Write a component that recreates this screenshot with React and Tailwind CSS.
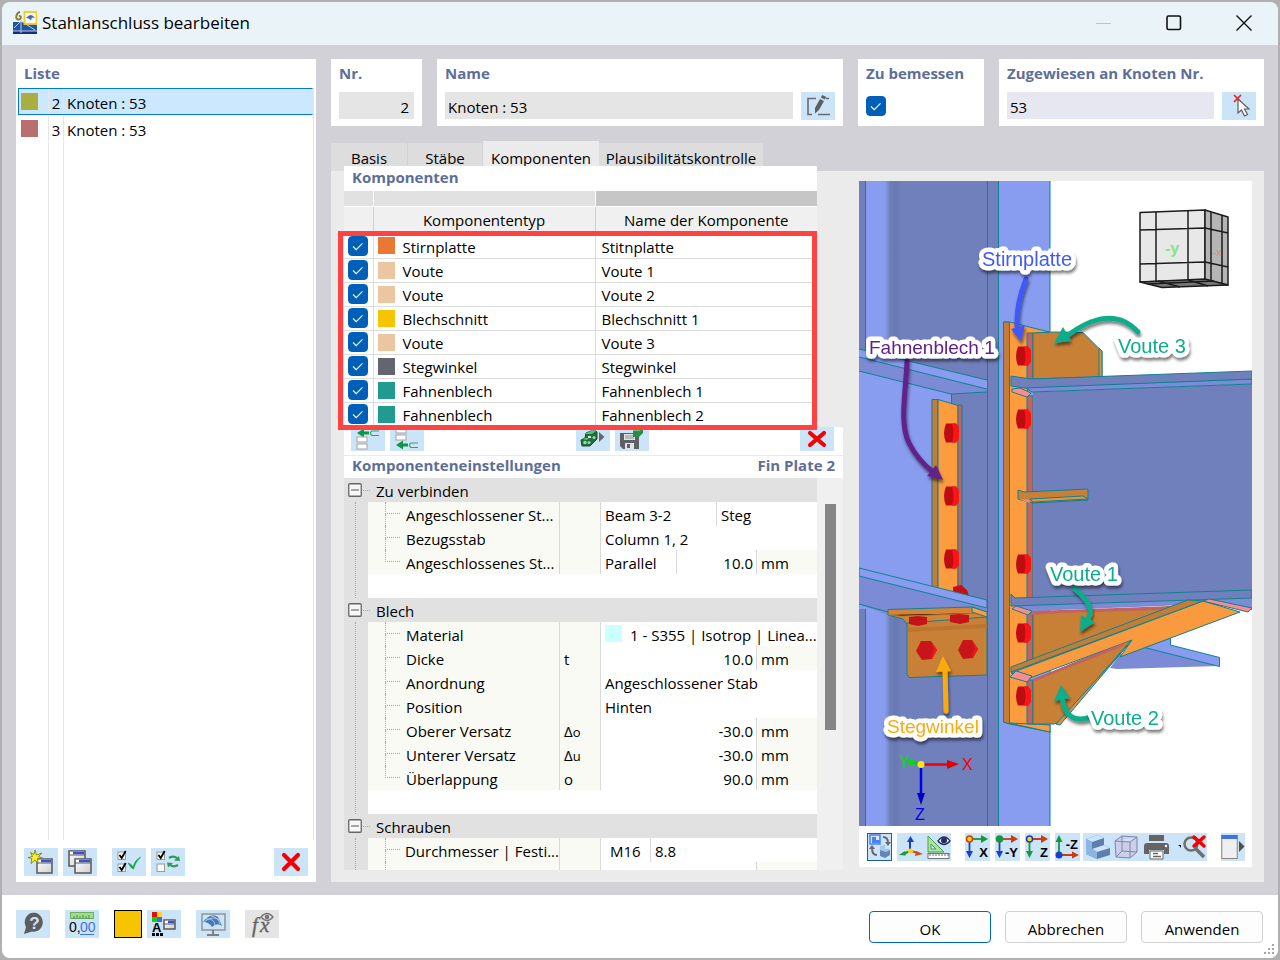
import { useState } from "react";

const entries = [
  { no: 2, name: "Knoten : 53", swatch: "bg-[#aaad42]" },
  { no: 3, name: "Knoten : 53", swatch: "bg-[#b96f70]" },
];

const components = [
  { type: "Stirnplatte", name: "Stitnplatte", swatch: "bg-[#e87832]" },
  { type: "Voute", name: "Voute 1", swatch: "bg-[#ecc5a1]" },
  { type: "Voute", name: "Voute 2", swatch: "bg-[#ecc5a1]" },
  { type: "Blechschnitt", name: "Blechschnitt 1", swatch: "bg-[#f6c500]" },
  { type: "Voute", name: "Voute 3", swatch: "bg-[#ecc5a1]" },
  { type: "Stegwinkel", name: "Stegwinkel", swatch: "bg-[#63666f]" },
  { type: "Fahnenblech", name: "Fahnenblech 1", swatch: "bg-[#219b90]" },
  { type: "Fahnenblech", name: "Fahnenblech 2", swatch: "bg-[#219b90]" },
];

const groups = [
  {
    title: "Zu verbinden",
    rows: [
      { label: "Angeschlossener St...", split: ["Beam 3-2", "Steg"], splitWidth: "w-[112px]" },
      { label: "Bezugsstab", text: "Column 1, 2" },
      { label: "Angeschlossenes St...", prefix: "Parallel", value: "10.0", unit: "mm" },
    ],
  },
  {
    title: "Blech",
    rows: [
      { label: "Material", text: "1 - S355 | Isotrop | Linea...", swatch: true },
      { label: "Dicke", symbol: "t", value: "10.0", unit: "mm" },
      { label: "Anordnung", text: "Angeschlossener Stab" },
      { label: "Position", text: "Hinten" },
      { label: "Oberer Versatz", symbol: "Δ", sub: "o", value: "-30.0", unit: "mm" },
      { label: "Unterer Versatz", symbol: "Δ", sub: "u", value: "-30.0", unit: "mm" },
      { label: "Überlappung", symbol: "o", value: "90.0", unit: "mm" },
    ],
  },
  {
    title: "Schrauben",
    open: true,
    rows: [
      { label: "Durchmesser | Festi...", split: ["M16", "8.8"], splitWidth: "w-[46px] pl-[5px]" },
      { label: "", value: "", unit: " " },
    ],
  },
];

const tabs = [
  { name: "Basis", width: "w-[77px]" },
  { name: "Stäbe", width: "w-[75px]" },
  { name: "Komponenten", width: "w-[116px]" },
  { name: "Plausibilitätskontrolle", width: "w-[165px]" },
];

const Check = ({ label, checked, onChange }) => (
  <span className="grid w-5 h-5">
    <input
      type="checkbox"
      aria-label={label}
      checked={checked}
      onChange={onChange}
      className="peer col-start-1 row-start-1 w-5 h-5 appearance-none rounded border border-[#8a8a8a] bg-white checked:border-[#005fb8] checked:bg-[#005fb8]"
    />
    <svg
      viewBox="0 0 20 20"
      className="pointer-events-none col-start-1 row-start-1 w-5 h-5 opacity-0 peer-checked:opacity-100"
      fill="none"
      stroke="#fff"
      strokeWidth="1.1"
    >
      <path d="M5 10.5l3.2 3.2 6.3-6.4" />
    </svg>
  </span>
);

const IconButton = ({ label, children, className = "w-[34px] h-7 bg-[#cce4f7]" }) => (
  <button type="button" aria-label={label} className={`flex shrink-0 items-end justify-center overflow-hidden ${className}`}>
    {children}
  </button>
);

const Icon = ({ children, w = 34 }) => (
  <svg viewBox={`0 0 ${w} 28`} width={w} height="28" className="shrink-0" fill="none">
    {children}
  </svg>
);

const DeleteIcon = () => (
  <Icon>
    <path d="M10 7l14 14M24 7L10 21" stroke="#f50000" strokeWidth="4.2" strokeLinecap="round" />
  </Icon>
);

const MiniWindow = ({ x, y, w = 16, h = 15 }) => (
  <g>
    <rect x={x} y={y} width={w} height={h} fill="url(#winFill)" stroke="#606060" strokeWidth="1.6" />
    <path d={`M${x + 1} ${y + 2}h${w - 2}`} stroke="#fff" strokeWidth="2.4" />
    <path d={`M${x + 4} ${y + 2}h${w - 5}`} stroke="#3551d8" strokeWidth="2.4" />
    <path d={`M${x} ${y + 4}h${w}`} stroke="#606060" strokeWidth="1.2" />
  </g>
);

const MiniCheck = ({ x, y, checked = true }) => (
  <g>
    <rect x={x} y={y} width="7.5" height="7.5" fill="#f7f7f7" stroke="#9a9a9a" />
    {checked && <path d={`M${x + 1.5} ${y + 3}l2.2 3 4-7`} stroke="#000" strokeWidth="1.8" />}
  </g>
);

const AppLogo = () => (
  <svg viewBox="0 0 24 24" width="24" height="24" className="shrink-0">
    <rect y="11" width="24" height="9" fill="#2454a0" />
    <rect y="20" width="24" height="3" fill="#152e7b" />
    <path d="M0 20h24M8 10v12M8 10L1 17M8 10l14 9M11 12l13 1" stroke="#b7cce8" strokeWidth="1" fill="none" />
    <path d="M7 1C3 2 2 8 5 8.500s4-4 1-3.500" stroke="#8a8130" strokeWidth="2" fill="none" />
    <rect x="11.5" y="1" width="12" height="12" fill="#fff" stroke="#f2c91e" strokeWidth="1.8" />
    <path d="M13 7q5-6 9 0l-3-.5-1 3-2-2z" fill="#3f6ca6" />
  </svg>
);

const Titlebar = () => (
  <header className="flex h-[43px] shrink-0 items-center bg-[#eaf4f8] pr-[26px] pb-0.5 pl-[11px]">
    <AppLogo />
    <h1 className="ml-[5px] flex-1 text-[17px]">Stahlanschluss bearbeiten</h1>
    <div className="flex items-center gap-[54px]">
      <button type="button" aria-label="Minimieren">
        <svg width="16" height="16"><path d="M0 8.5h15" stroke="#bdc3c6" /></svg>
      </button>
      <button type="button" aria-label="Maximieren">
        <svg width="16" height="16"><rect x="1" y="1" width="13.5" height="13.5" rx="1.5" fill="none" stroke="#111" strokeWidth="1.6" /></svg>
      </button>
      <button type="button" aria-label="Schließen">
        <svg width="16" height="16"><path d="M.5.5l15 15M15.5.5L.5 15.5" stroke="#111" strokeWidth="1.4" /></svg>
      </button>
    </div>
  </header>
);

const ListPanel = ({ selected, onSelect }) => (
  <aside className="flex w-[300px] shrink-0 flex-col bg-white">
    <h2 className="h-[29px] px-2 pt-1 leading-5 font-bold text-[#5d6e97]">Liste</h2>
    <ul className="mx-0.5 flex flex-1 flex-col border-r border-[#e6e6e6]">
      {entries.map((entry) => (
        <li key={entry.no}>
          <button
            type="button"
            onClick={() => onSelect(entry.no)}
            className={`flex h-[27px] w-full items-center border text-left ${
              selected === entry.no ? "border-[#0078d7] border-r-transparent bg-[#cce8ff]" : "border-transparent"
            }`}
          >
            <span className={`ml-0.5 w-[17px] h-[17px] ${entry.swatch}`} />
            <span className="ml-[10px] flex h-full w-4 items-center justify-center border-x border-[#e6e6e6] pt-0.5">{entry.no}</span>
            <span className="ml-[3px] pt-0.5">{entry.name}</span>
          </button>
        </li>
      ))}
      <li aria-hidden="true" className="flex flex-1">
        <span className="ml-[30px] w-4 border-x border-[#e6e6e6]" />
      </li>
    </ul>
    <div className="flex items-center gap-[5px] px-2 pt-2 pb-1.5">
      <IconButton label="Neu">
        <Icon>
          <MiniWindow x={13} y={11} w={15} h={14} />
          <path d="M11 2l1.500 5L18 5l-3.500 3.500 4 1.500-5 .5.5 5-3-3.500-4 3.500.8-5L4 9.500l4.500-1-2-4 3.500 2z" fill="#fff21a" stroke="#777420" strokeWidth=".8" />
        </Icon>
      </IconButton>
      <IconButton label="Kopieren">
        <Icon>
          <MiniWindow x={6} y={3} />
          <MiniWindow x={12} y={11} w={16} h={14} />
        </Icon>
      </IconButton>
      <span className="w-[5px]" />
      <IconButton label="Alle auswählen">
        <Icon>
          <MiniCheck x={6} y={4} />
          <MiniCheck x={6} y={16} />
          <path d="M16 15q3 .5 5 3.500Q23 12 28.500 9q-5 5-7 12-2 0-5.500-6z" fill="#16a34a" stroke="#16a34a" strokeWidth=".6" />
        </Icon>
      </IconButton>
      <IconButton label="Auswahl umkehren">
        <Icon>
          <MiniCheck x={6} y={4} />
          <MiniCheck x={6} y={16} checked={false} />
          <path d="M18 10q5-3 9 1M27 17q-5 3-9-1" stroke="#2f9e57" strokeWidth="2.2" />
          <path d="M29 13l-6-.5 5-4.500zM16 14.500l6 .5-5 4.500z" fill="#2f9e57" />
        </Icon>
      </IconButton>
      <span className="flex-1" />
      <IconButton label="Löschen">
        <DeleteIcon />
      </IconButton>
    </div>
  </aside>
);

const Field = ({ title, className, children, htmlFor }) => (
  <div className={`h-[67px] bg-white px-2 pt-1 ${className}`}>
    <label htmlFor={htmlFor} className="block h-[29px] leading-5 font-bold whitespace-nowrap text-[#5d6e97]">
      {title}
    </label>
    <div className="flex gap-2">{children}</div>
  </div>
);

const HeaderFields = () => {
  const [design, setDesign] = useState(true);

  return (
    <div className="flex gap-[15px]">
      <Field title="Nr." className="w-[91px]" htmlFor="nr">
        <input id="nr" readOnly defaultValue="2" className="h-[27px] w-full bg-[#e5e5e5] pt-0.5 pr-[5px] text-right" />
      </Field>
      <Field title="Name" className="min-w-0 flex-1" htmlFor="name">
        <input id="name" readOnly defaultValue="Knoten : 53" className="h-[27px] min-w-0 flex-1 bg-[#e5e5e5] pt-0.5 pl-[3px]" />
        <IconButton label="Name bearbeiten">
          <Icon>
            <path d="M15 6.500H7v16h4M25 6.500h3M17 22.500h12" stroke="#6b6b6b" strokeWidth="1.6" />
            <path d="M14 16l5-9 4 2-5 9-4 3.500zM19.800 5.500l1.500-2.500 4 2-1.500 2.500z" fill="#5f5f5f" />
          </Icon>
        </IconButton>
      </Field>
      <Field title="Zu bemessen" className="w-[126px]">
        <div className="pt-1">
          <Check label="Zu bemessen" checked={design} onChange={() => setDesign(!design)} />
        </div>
      </Field>
      <Field title="Zugewiesen an Knoten Nr." className="w-[265px]" htmlFor="nodes">
        <input id="nodes" defaultValue="53" className="h-[27px] min-w-0 flex-1 bg-[#e7e7f1] pt-0.5 pl-[3px]" />
        <IconButton label="Knoten wählen">
          <Icon>
            <path d="M12 3l7 7M19 3l-7 7" stroke="#f01818" strokeWidth="1.6" />
            <path d="M16 7v14l3.500-3 3 6 3-1.500-3-5.500h4.500z" fill="#fff" stroke="#5c5c5c" strokeWidth="1.2" />
          </Icon>
        </IconButton>
      </Field>
    </div>
  );
};

const ComponentTable = () => {
  const [active, setActive] = useState(components.map(() => true));
  const toggle = (i) => setActive(active.map((v, j) => (i === j ? !v : v)));

  return (
    <section className="mr-[26px]">
      <h2 className="h-[25px] bg-white pl-2 leading-[22px] font-bold text-[#5d6e97]">Komponenten</h2>
      <div className="relative">
        <table className="w-full table-fixed border-collapse bg-white">
          <colgroup>
            <col className="w-[29px]" />
            <col className="w-[222px]" />
            <col />
          </colgroup>
          <thead>
            <tr className="h-[15px]">
              <td className="border-r border-b border-white bg-[#e1e1e1]" />
              <td className="border-r border-b border-white bg-[#e1e1e1]" />
              <td className="border-b border-white bg-[#c6c6c6]" />
            </tr>
            <tr className="h-7 bg-[#f0f0f0]">
              <th className="border-r border-[#d0d0d0] p-0" aria-label="Aktiv" />
              <th className="border-r border-[#d0d0d0] p-0 font-normal">Komponententyp</th>
              <th className="p-0 font-normal">Name der Komponente</th>
            </tr>
          </thead>
          <tbody>
            {components.map((item, i) => (
              <tr key={item.name} className="h-6 border-b border-[#dcdcdc]">
                <td className="border-r border-[#dcdcdc] p-0 pl-1">
                  <Check label={item.name} checked={active[i]} onChange={() => toggle(i)} />
                </td>
                <td className="border-r border-[#dcdcdc] p-0">
                  <div className="flex items-center">
                    <span className={`mr-2 ml-1 w-[17px] h-[17px] ${item.swatch}`} />
                    <span className="pt-0.5">{item.type}</span>
                  </div>
                </td>
                <td className="p-0 pt-0.5 pl-1.5">{item.name}</td>
              </tr>
            ))}
          </tbody>
        </table>
        <div className="pointer-events-none absolute top-10 right-0 -bottom-[3px] -left-1.5 border-5 border-[#ff4343]" />
      </div>
    </section>
  );
};

const ComponentToolbar = () => (
  <div className="flex h-[29px] shrink-0 gap-[5px] border-b border-[#ebebeb] bg-white pr-[9px] pl-[7px]">
    <IconButton label="Davor einfügen" className="w-[34px] h-6 bg-[#cce4f7]">
      <Icon>
        <path d="M6 10l7-4.500v3h5v3h-5v3z" fill="#0f9648" />
        <path d="M28 8h-7q-3 2 0 4.500h7" stroke="#2fa563" strokeWidth="1.2" />
        <rect x="6" y="14" width="10" height="5" fill="#fff" stroke="#a5a5a5" />
        <rect x="6" y="21" width="10" height="5" fill="#fff" stroke="#a5a5a5" />
      </Icon>
    </IconButton>
    <IconButton label="Danach einfügen" className="w-[34px] h-6 bg-[#cce4f7]">
      <Icon>
        <rect x="6" y="5" width="10" height="5" fill="#fff" stroke="#a5a5a5" />
        <rect x="6" y="12" width="10" height="5" fill="#fff" stroke="#a5a5a5" />
        <path d="M6 22l7-4.500v3h5v3h-5v3z" fill="#0f9648" />
        <path d="M28 20h-7q-3 2 0 4.500h7" stroke="#2fa563" strokeWidth="1.2" />
      </Icon>
    </IconButton>
    <span className="flex-1" />
    <IconButton label="Bibliothek" className="w-[34px] h-6 bg-[#cce4f7]">
      <Icon>
        <path d="M5 17l4-2 1-5 5-2h5l1 1v7l-7 7H6z" fill="#1f6e38" stroke="#174f2b" />
        <path d="M10 10l5-2h5l-4 3h-6zM6 16l4-1h3l-2 2z" fill="#5cbd7c" />
        <path d="M12 13h3v2h-3z" fill="#cdebd6" />
        <circle cx="9" cy="19.5" r="1.8" fill="#9bd4ae" />
        <circle cx="13" cy="19.5" r="1.5" fill="#9bd4ae" />
        <circle cx="18" cy="14.5" r="1.5" fill="#9bd4ae" />
        <path d="M23 9l5.500 5-5.500 5z" fill="#666" />
      </Icon>
    </IconButton>
    <IconButton label="Speichern" className="w-[34px] h-6 bg-[#cce4f7]">
      <Icon>
        <path d="M5 10h17l2 2v14H8l-3-3z" fill="#5f6063" />
        <path d="M9 11h11v6H9z" fill="#dfe4ea" />
        <path d="M10 13h9M10 15h9" stroke="#77797c" strokeWidth=".8" />
        <path d="M10 20h9v6h-9z" fill="#dfe4ea" />
        <path d="M12 21h3v4h-3z" fill="#5f6063" />
        <path d="M18 8l4-4h6v6l-4 4h-6z" fill="#2b8a49" />
        <path d="M18 8l4-4h6l-3 4z" fill="#62c382" />
      </Icon>
    </IconButton>
    <span className="w-[141px]" />
    <IconButton label="Komponente löschen" className="w-[34px] h-6 bg-[#cce4f7]">
      <Icon>
        <path d="M10 10l14 12M24 10L10 22" stroke="#f50000" strokeWidth="4.2" strokeLinecap="round" />
      </Icon>
    </IconButton>
  </div>
);

const PropertyValue = ({ row }) => {
  if (row.split) {
    return (
      <>
        <span className={`flex h-full items-center border-r border-[#d9d9d9] pt-0.5 ${row.splitWidth}`}>{row.split[0]}</span>
        <span className="pt-0.5 pl-1">{row.split[1]}</span>
      </>
    );
  }
  if (row.unit) {
    return (
      <>
        {row.prefix && <span className="flex h-full w-[72px] items-center border-r border-[#d9d9d9] pt-0.5">{row.prefix}</span>}
        <span className="flex-1 pt-0.5 pr-[3px] text-right">{row.value}</span>
        <span className="flex h-full w-[61px] items-center border-l border-[#d9d9d9] bg-[#f9faf4] pt-0.5 pl-1">{row.unit}</span>
      </>
    );
  }
  return (
    <>
      {row.swatch && <span className="mr-2 w-[17px] h-[17px] shrink-0 bg-[#ccffff]" />}
      <span className="pt-0.5 whitespace-nowrap">{row.text}</span>
    </>
  );
};

const PropertyTree = () => (
  <div className="h-full min-h-0 min-w-0 flex-1 overflow-hidden bg-white">
    {groups.map((group) => (
      <section key={group.title}>
        <h3 className="flex h-6 items-center bg-[#e1e1e1]">
          <button type="button" aria-label={`${group.title} einklappen`} className="ml-1 flex w-7 items-center">
            <svg width="28" height="14">
              <rect x=".75" y=".75" width="12.5" height="12.5" rx="1" fill="#f8f8f8" stroke="#666" strokeWidth="1.3" />
              <path d="M3 7h8" stroke="#8a8a8a" strokeWidth="1.5" />
              <path d="M15 7.5h8" stroke="#aaa" strokeDasharray="1 1" />
            </svg>
          </button>
          <span className="pt-0.5">{group.title}</span>
        </h3>
        <div className="flex">
          <div className="flex w-6 shrink-0 bg-[#e1e1e1]">
            <span className="ml-[11px] border-l border-dotted border-[#aaa]" />
          </div>
          <div className={`min-w-0 flex-1 ${group.open ? "" : "pb-6"}`}>
            {group.rows.map((row, i) => {
              const last = i === group.rows.length - 1 && !group.open;
              return (
                <div key={i} className="flex h-6 items-center">
                  <div className="flex h-full w-48 shrink-0 items-center border-r border-[#d9d9d9] bg-[#f9faf4]">
                    <span className="flex h-full w-[38px] flex-col pl-[17px]">
                      <span className="h-3 w-[15px] border-b border-l border-dotted border-[#aaa]" />
                      {!last && <span className="h-3 w-[15px] border-l border-dotted border-[#aaa]" />}
                    </span>
                    <span className="pt-0.5 whitespace-nowrap">{row.label}</span>
                  </div>
                  <div className="flex h-full w-[41px] shrink-0 items-center border-r border-[#d9d9d9] bg-[#f9faf4] pt-0.5 pl-1">
                    {row.symbol}
                    {row.sub && <span className="pt-0.5 text-[13px]">{row.sub}</span>}
                  </div>
                  <div className="flex h-full min-w-0 flex-1 items-center pl-1">
                    <PropertyValue row={row} />
                  </div>
                </div>
              );
            })}
          </div>
        </div>
      </section>
    ))}
  </div>
);

// upright bolt heads seen from the side
const sideBolts = [
  [951, 433], [951, 496], [951, 559],
  [1023, 356], [1023, 419], [1023, 564], [1023, 633], [1023, 696],
];

const Model = () => (
  <svg viewBox="859 181 393 645" preserveAspectRatio="xMinYMin slice" className="min-h-0 w-full flex-1 bg-white" role="img" aria-label="3D-Modell">
    <defs>
      <linearGradient id="fillet">
        <stop offset="0" stopColor="#889cf0" />
        <stop offset=".3" stopColor="#6f7fb9" />
        <stop offset=".6" stopColor="#6878b2" />
        <stop offset="1" stopColor="#7080bd" />
      </linearGradient>
      <linearGradient id="winFill" x2="1" y2="1">
        <stop stopColor="#fff" />
        <stop offset="1" stopColor="#cfcfcf" />
      </linearGradient>
      <filter id="drop" x="-20%" y="-20%" width="140%" height="160%">
        <feDropShadow dx="1" dy="3" stdDeviation="1.5" floodColor="#000" floodOpacity=".5" />
      </filter>
    </defs>

    {/* column */}
    <rect x="859" y="181" width="191" height="645" fill="#7080bd" />
    <rect x="865" y="181" width="21" height="645" fill="#889cf0" />
    <rect x="885" y="181" width="17" height="645" fill="url(#fillet)" />
    <rect x="998" y="181" width="52" height="645" fill="#889cf0" />
    <g stroke="#0e8290" strokeWidth="1">
      <path d="M865.500 181v645" />

      {/* beam behind the column with its stiffeners */}
      <g stroke="none">
        <path d="M859 349l128 31v229H859z" fill="#889cf0" />
        <path d="M951 394l36-3v218h-36z" fill="#7080bd" />
        <path d="M859 357l128 32v4l-36 1-92-23z" fill="#7b8bd6" />
      </g>
      <path d="M859 349l128 31M859 357l128 32M859 371l92 23 36-2M951.500 394v10" fill="none" />

      {/* fin plate */}
      <path d="M932 399.500h6V592l-6-2z" fill="#c37d38" />
      <path d="M938 399.500l20 6V597l-20-4z" fill="#fd9c3e" />
      <path d="M958 405h4v194h-4z" fill="#c26362" />
      <path d="M953 587l8-2 6 5 2 6-16-3z" fill="#c40f14" stroke="none" />
      <path d="M859 576l129 32v7h-100l-29-11z" fill="#7b8bd6" stroke="none" />
      <path d="M859 568l128 32v8l-128-32z" fill="#889cf0" />
      <path d="M859 604l29 8" />

      {/* web angle */}
      <path d="M888 609.500l84-2.500 15 5v13l-80-1-4-5-15-4z" fill="#d38436" />
      <path d="M907 623l80-6v58l-78 2.500-2-3z" fill="#c88037" />
      <path d="M888 615l14 1 85-3" stroke="#b46f2b" />
      <path d="M972 607l15 5v5l-15-5z" fill="#fd9c3e" />
      <path d="M908 630l79-4" stroke="#bb7530" strokeWidth="4" />
      <path d="M987.500 181v645M998.500 181v645M1050 181v645" />

      {/* lower flange of the beam beyond the haunch */}
      <path d="M1110 668l10-14 30-10 69 18v4l-102 3z" fill="#7b8bd6" stroke="none" />
      <path d="M1170.500 638v7l49 12.500v9l-75-19z" fill="#889cf0" />

      {/* end plate */}
      <path d="M1003.500 322h6l40 10-22 2v391l23 7-41-8-6-2z" fill="#fd9c3e" />
      <path d="M1009 723l23 1 18 1v7z" fill="#fd9c3e" />
      <path d="M1003.500 322h6v402l-6-2z" fill="#c37d38" />
      <path d="M1027 333h6v47l-6-2zM1027 396h6v206h-6zM1027 613h6v51l-6 3zM1027 680h6v44h-6z" fill="#c26362" />
      <path d="M1033 333l21-1 29 .5 19 19V377l-69 2z" fill="#c88037" />
      <path d="M1099 348l3 3v26h-3z" fill="#d99140" />

      {/* beam on the right */}
      <path d="M1033 392l219-8v214l-219 6z" fill="#7080bd" stroke="none" />
      <path d="M1024 387l228-8v5l-220 8z" fill="#7b8bd6" />
      <path d="M1011 376l20 3 221-8v8l-228 9-13-2z" fill="#7080bd" />
      <path d="M1012 389l8-1 11 5-4 4-15-5z" fill="#ff8c8c" />
      <path d="M1018 490l6 2 64-3v11l-55 3-15-4z" fill="#c88037" />
      <path d="M1030 499l53-3 5 3-55 3z" fill="#e59342" />
      <path d="M1019 499l10 1 1 3z" fill="#ff8c8c" stroke="none" />
      <path d="M1012 605l240-7v12l-40-6-179 7-16-4z" fill="#7b8bd6" stroke="none" />
      <path d="M1011 594l4 4 237-8v8l-241 8z" fill="#7080bd" />

      {/* haunch 1 */}
      <path d="M1033 613l140-6 20-6-160 66z" fill="#c88037" />
      <path d="M1032 611l28-1 112-4-12 4-100 3-29 2z" fill="#c26362" stroke="none" />
      <path d="M1012 609l4-3 16 5-4 4z" fill="#ff8c8c" />
      <path d="M1033 680l99-41-72 83-6 2h-21z" fill="#c88037" />
      <path d="M1128 645l4-5-72 85-4-1z" fill="#d99140" />
      <path d="M1203 601l37 11-120 45 12-17-102 38-19-5z" fill="#f89a3d" />
      <path d="M1188 600l15 1-192 71v-5z" fill="#c37d38" />
      <path d="M1033 679l95-38-7 6-88 35z" fill="#c26362" stroke="none" />
      <path d="M1203 601l6-2 43 9-4 4z" fill="#ff8c8c" />
      <path d="M1010 677l6-6 16 5-5 6z" fill="#ff8c8c" />
    </g>

    {/* bolts */}
    {sideBolts.map(([x, y]) => (
      <g key={`${x}-${y}`}>
        <path d={`M${x - 5} ${y - 9.5}h10l3 4v11l-3 4h-10q-4-9 0-19z`} fill="#bf0c12" />
        <path d={`M${x + 1} ${y - 9.5}h4l3 4v11l-3 4h-4q3-9 0-19z`} fill="#ff1414" />
      </g>
    ))}
    <path d="M909 617l9-1 9 1v7l-9 2-9-2zM950 615l9-1 10 1v7l-9 2-10-2z" fill="#c41418" />
    <path d="M921 641h10l6 9-5 9-10 1-6-9zM963 640h9l6 9-5 9-10 1-5-9z" fill="#c91519" />
    <path d="M931 641l6 9-5 9-1-2 3-7zM972 640l6 9-5 9-1-2 3-7z" fill="#f01a1a" />

    {/* axes */}
    <g strokeWidth="2.5" fontFamily="Liberation Sans, sans-serif" fontSize="16">
      <path d="M922 764.500h26" stroke="#f00000" />
      <path d="M947 760l12 4-12 5z" fill="#e00000" />
      <path d="M921 766v30" stroke="#0000f0" />
      <path d="M917 793h8l-4 12z" fill="#0000c0" />
      <path d="M920 764l-10-2" stroke="#00d000" />
      <circle cx="911" cy="762" r="3" fill="#00e000" />
      <circle cx="921" cy="764.5" r="3.5" fill="#ffe51f" />
      <text x="899" y="767" fill="#00e000">Y</text>
      <text x="962" y="770" fill="#f00000">X</text>
      <text x="915" y="820" fill="#0000f0">Z</text>
    </g>

    {/* navigation cube */}
    <g stroke="#1c1c1c" strokeWidth="1.5" strokeLinejoin="round">
      <path d="M1140 212.500l65-2.500v70l-65 2z" fill="#e8e8e8" />
      <path d="M1205 210l23 7v68l-23-5z" fill="#b5b5b5" />
      <path d="M1140 282l65-3 23 6-66 2.500z" fill="#777" />
      <path d="M1156 212v70M1188 211v69M1140 230l65-2 23 5M1140 264l65-2 23 5M1211 212v69M1222 215v69M1148 284l66-3M1158 281l22 6M1188 280l20 6" fill="none" />
    </g>
    <text x="1165" y="254" fontFamily="Liberation Sans, sans-serif" fontSize="16" fontWeight="bold" fill="#84e584">-y</text>
    <text x="1213" y="256" fontFamily="Liberation Sans, sans-serif" fontSize="10" fill="#d98c8c">-x</text>

    {/* callouts */}
    <g filter="url(#drop)" fill="none" strokeWidth="5" strokeLinecap="round">
      <path d="M1026 279q-10 25-9 48" stroke="#4059f5" />
      <path d="M1011 329l14-4-4 17z" fill="#4059f5" />
      <path d="M907 361c-1 30-8 62 2 82q8 16 24 29" stroke="#62208a" />
      <path d="M927 476l9-11 7 15z" fill="#62208a" />
      <path d="M1138 332q-26-29-70 3" stroke="#0cad8c" />
      <path d="M1054 343l9-16 8 14z" fill="#0cad8c" />
      <path d="M1074 588q22 18 14 31" stroke="#0cad8c" />
      <path d="M1080 632l1-17 14 7z" fill="#0cad8c" />
      <path d="M1088 718q-22 6-26-20" stroke="#0cad8c" />
      <path d="M1061 685l9 13-16 3z" fill="#0cad8c" />
      <path d="M946 711l-1-42" stroke="#fbaa0d" />
      <path d="M943 656l8 15-15 1z" fill="#fbaa0d" />
    </g>
    <g filter="url(#drop)" fontFamily="Liberation Sans, sans-serif" fontSize="20" stroke="#fff" strokeWidth="9" strokeLinejoin="round" paintOrder="stroke">
      <text x="982" y="266" fill="#4059f5">Stirnplatte</text>
      <text x="869" y="354" fontSize="19" fill="#62208a">Fahnenblech 1</text>
      <text x="1118" y="353" fill="#0cad8c">Voute 3</text>
      <text x="1050" y="581" fill="#0cad8c">Voute 1</text>
      <text x="1091" y="725" fill="#0cad8c">Voute 2</text>
      <text x="887" y="733" fontSize="19" fill="#fbaa0d">Stegwinkel</text>
    </g>
  </svg>
);

const AxisButton = ({ label, dot, ring, right, down, up }) => (
  <IconButton label={`Ansicht ${label}`} className="w-[25px] h-7 bg-[#cce4f7]">
    <Icon w={25}>
      {up ? (
        <>
          <path d="M4 21V8" stroke={down} strokeWidth="1.8" />
          <path d="M.5 9L4 2l3.500 7z" fill={down} />
          <path d="M5 22h12" stroke={right} strokeWidth="1.8" />
          <path d="M17 18.500l7 3.500-7 3.500z" fill={right} />
          <circle cx="4" cy="22" r="3.5" fill={dot} />
        </>
      ) : (
        <>
          <path d="M5 6h12" stroke={right} strokeWidth="1.8" />
          <path d="M16 2l7 4-7 4z" fill={right} />
          <path d="M4.500 8v11" stroke={down} strokeWidth="1.8" />
          <path d="M1 18h7l-3.500 7z" fill={down} />
          <circle cx="4.5" cy="6" r="3" fill={dot} stroke={ring} strokeWidth="1.5" />
        </>
      )}
      <text x="23" y={up ? 16 : 24} textAnchor="end" fontFamily="Liberation Sans, sans-serif" fontWeight="bold" fontSize="13" fill="#000">
        {label}
      </text>
    </Icon>
  </IconButton>
);

const ViewToolbar = () => (
  <div className="flex h-[41px] shrink-0 items-start bg-white pt-[7px] pr-[7px] pl-2">
    <IconButton label="Ansicht wechseln" className="w-[25px] h-7 border border-[#1c5fa0] bg-[#cce4f7]">
      <Icon w={25}>
        <rect x="3" y="3" width="10" height="9" fill="#dbe7ff" stroke="#4a80ef" strokeWidth="1.5" />
        <path d="M5 5h4v3h4v3H5z" fill="#4a80ef" />
        <path d="M16 5q5 0 5 6M10 23q-5 0-5-7" stroke="#686868" strokeWidth="2" />
        <path d="M18 10h6l-3 4zM2 17h6l-3-4z" fill="#686868" />
        <path d="M13 15l5-2v4l5 1v5l-5 3-5-2z" fill="#6486b8" />
        <path d="M13 15l5-2v4l5 1-4 2-6-2z" fill="#a6c9ee" />
      </Icon>
    </IconButton>
    <IconButton label="Achsen" className="ml-[5px] w-[27px] h-7 bg-[#cce4f7]">
      <Icon w={27}>
        <path d="M13 17V7" stroke="#1642c9" strokeWidth="2" />
        <path d="M10 9l3.500-6 3.500 6z" fill="#1642c9" />
        <path d="M13 18l-7 3" stroke="#18983b" strokeWidth="2" />
        <path d="M2 22l6-4 1 4.500z" fill="#18983b" />
        <path d="M14 18l7 2" stroke="#d14a16" strokeWidth="2" />
        <path d="M26 21l-7-3-1 5z" fill="#d14a16" />
        <circle cx="13.5" cy="18" r="2.5" fill="#ffd21a" />
      </Icon>
    </IconButton>
    <IconButton label="Bemaßung anzeigen" className="w-[27px] h-7 bg-[#cce4f7]">
      <Icon w={27}>
        <path d="M4 3v16h16z" fill="#a5e89b" stroke="#4d9d4c" />
        <path d="M7 11v5h5z" fill="#cce4f7" stroke="#4d9d4c" />
        <rect x="4" y="20.5" width="21" height="5" fill="#fff" stroke="#555" strokeWidth=".8" />
        <path d="M6 21v2M9 21v2M12 21v2M15 21v2M18 21v2M21 21v2M24 21v2" stroke="#444" strokeWidth=".8" />
        <path d="M14 8q6-8 12 0-6 7-12 0z" fill="#fff" stroke="#252b66" strokeWidth="1.3" />
        <circle cx="20" cy="7.5" r="3" fill="#252b66" />
      </Icon>
    </IconButton>
    <div className="ml-3.5 flex gap-[5px]">
      <AxisButton label="X" dot="#ffd60a" ring="#d33c10" right="#18983b" down="#1642c9" />
      <AxisButton label="-Y" dot="#18983b" ring="#18983b" right="#cc3b12" down="#1642c9" />
      <AxisButton label="Z" dot="#ffd60a" ring="#153dc4" right="#cc3b12" down="#18983b" />
      <AxisButton label="-Z" dot="#1642c9" right="#cc3b12" down="#18983b" up />
    </div>
    <div className="ml-[3px] flex bg-[#cce4f7]">
      <IconButton label="Volumenmodell" className="w-[29px] h-7">
        <Icon w={29}>
          <path d="M3 6l12-4 6 3v7l6 3v7l-13 4-11-5z" fill="#5e7fae" />
          <path d="M3 6l12-4 6 3-12 4zM9 16l12-4 6 3-13 4z" fill="#cbe4ff" />
          <path d="M3 6l6 3v7l5 3v7l-11-5z" fill="#8db5e2" />
        </Icon>
      </IconButton>
      <IconButton label="Drahtmodell" className="w-[29px] h-7">
        <Icon w={29}>
          <path d="M3 8l7-5 15 1v15l-7 6-14-1zM3 8l15 1 7-5M18 9v16M10 3v15l-6 6M10 18l15 1" fill="#c9c6e4" fillOpacity=".7" stroke="#8482a6" />
        </Icon>
      </IconButton>
      <IconButton label="Drucken" className="w-[31px] h-7">
        <Icon w={31}>
          <path d="M8 2h15v6H8zM6 10h19q3 0 3 3v8h-5v-4H8v4H3v-8q0-3 3-3z" fill="#646464" />
          <circle cx="25" cy="13" r="1.2" fill="#fff" />
          <path d="M9 18h13v8H9z" fill="#fff" stroke="#646464" />
          <path d="M12 20.500h5M12 23.500h8" stroke="#646464" strokeWidth="1.5" />
        </Icon>
      </IconButton>
      <IconButton label="Zoom zurücksetzen" className="w-[35px] h-7">
        <Icon w={35}>
          <path d="M6 12h3v3q-1-2-3-3z" fill="#111" />
          <circle cx="19" cy="11" r="6.5" stroke="#6e6e6e" strokeWidth="2.5" />
          <path d="M23.500 15.500L32 24" stroke="#6e6e6e" strokeWidth="3.5" />
          <path d="M22 4l10 9M32 4l-10 9" stroke="#f50000" strokeWidth="3.5" strokeLinecap="round" />
        </Icon>
      </IconButton>
    </div>
    <span className="flex-1" />
    <IconButton label="Seitenleiste" className="w-[24px] h-7 bg-[#cce4f7]">
      <Icon w={24}>
        <rect x=".75" y="2.5" width="15.5" height="23" fill="#efefef" stroke="#858585" />
        <path d="M.5 4h16" stroke="#416fe8" strokeWidth="4" />
        <path d="M18 8l5.500 5.500L18 19z" fill="#4f4f4f" />
      </Icon>
    </IconButton>
  </div>
);

const Footer = () => (
  <footer className="relative flex h-[63px] shrink-0 items-start bg-white px-3.5 pt-[15px]">
    <div className="flex gap-[15px]">
      <IconButton label="Hilfe">
        <Icon>
          <path d="M8 24l2-7a9 9.500 0 1 1 6 4.500z" fill="#5d5d5d" />
          <text x="18.5" y="19" textAnchor="middle" fontFamily="Liberation Sans, sans-serif" fontSize="17" fontWeight="bold" fill="#cce4f7">?</text>
        </Icon>
      </IconButton>
      <IconButton label="Einheiten und Dezimalstellen">
        <Icon>
          <rect x="5.5" y="2.5" width="23" height="6" fill="#a0dd8e" stroke="#6fae62" />
          <path d="M9 6v3M12 5v4M15 6v3M18 5v4M21 6v3M24 5v4" stroke="#4d8f45" />
          <text x="4" y="22" fontFamily="Liberation Sans, sans-serif" fontSize="14" fill="#000">0,</text>
          <text x="15" y="22" fontFamily="Liberation Sans, sans-serif" fontSize="14" fill="#3d74df">00</text>
          <path d="M15 24.500h14" stroke="#3d74df" />
        </Icon>
      </IconButton>
      <div className="flex gap-[5px]">
        <button type="button" aria-label="Farbe" className="w-7 h-7 border border-black bg-[#f6c500]" />
        <IconButton label="Anzeigeeigenschaften">
          <Icon>
            <path d="M5 2h5v5H5z" fill="#e01010" />
            <path d="M10 2h5v5h-5z" fill="#ffd61a" />
            <path d="M5 7h5v5H5z" fill="#10d010" />
            <path d="M10 7h5v5h-5z" fill="#4468f0" />
            <MiniWindow x={17} y={10} w={11} h={9} />
            <text x="5" y="22" fontFamily="Liberation Sans, sans-serif" fontSize="13" fontWeight="bold" fill="#000">A</text>
            <path d="M5 24.500h12" stroke="#000" strokeWidth="3" strokeDasharray="3 1" />
          </Icon>
        </IconButton>
      </div>
      <IconButton label="Ergebnisdarstellung">
        <Icon>
          <rect x="6" y="4" width="23" height="16" stroke="#8e8e8e" strokeWidth="1.4" />
          <path d="M17 20v4M11 25h12" stroke="#808080" strokeWidth="2" />
          <path d="M7 12q8-10 15-5l4 9q-5-4-10 1-3-5-9-5z" fill="#4879b2" />
          <path d="M10 9q8-1 9 6M15 6q7 1 9 8M8 12q8-7 16-2" stroke="#b8d7f4" strokeWidth=".8" />
        </Icon>
      </IconButton>
      <IconButton label="Formel" className="w-[34px] h-7 bg-[#e5e5e5]">
        <Icon>
          <text x="7" y="22" fontFamily="Liberation Serif, serif" fontStyle="italic" fontSize="21" fill="#666" stroke="#666" strokeWidth=".4">f</text>
          <text x="15" y="22" fontFamily="Liberation Serif, serif" fontStyle="italic" fontSize="21" fill="#666" stroke="#666" strokeWidth=".4">x</text>
          <path d="M16 7q6-7 12 0-6 7-12 0z" stroke="#777" strokeWidth="1.3" />
          <circle cx="22" cy="7" r="2.3" fill="#777" />
        </Icon>
      </IconButton>
    </div>
    <div className="mt-px mr-px ml-auto flex gap-3.5">
      <button type="button" className="h-8 w-[122px] rounded border border-[#0067c0] bg-[#fdfdfd] pt-1">OK</button>
      <button type="button" className="h-8 w-[122px] rounded border border-[#d0d0d0] bg-[#fdfdfd] pt-1">Abbrechen</button>
      <button type="button" className="h-8 w-[122px] rounded border border-[#d0d0d0] bg-[#fdfdfd] pt-1">Anwenden</button>
    </div>
    <svg width="12" height="12" className="absolute right-0.5 bottom-0.5" fill="#a8a8a8" aria-hidden="true">
      <path d="M8 0h2v2H8zM4 4h2v2H4zM8 4h2v2H8zM0 8h2v2H0zM4 8h2v2H4zM8 8h2v2H8z" />
    </svg>
  </footer>
);

const App = () => {
  const [selected, setSelected] = useState(2);
  const [tab, setTab] = useState("Komponenten");

  return (
    <div className="h-screen bg-[#b0b0b2] p-0.5 font-['Open_Sans','Noto_Sans',sans-serif] text-[15px] leading-5 text-black">
      <div className="flex h-full flex-col overflow-hidden rounded-lg bg-[#d2d1d7]">
        <Titlebar />
        <main className="flex min-h-0 flex-1 gap-[15px] px-3.5 pt-3.5 pb-[13px]">
          <ListPanel selected={selected} onSelect={setSelected} />
          <div className="flex min-w-0 flex-1 flex-col">
            <HeaderFields />
            <div role="tablist" className="mt-[15px] flex h-[30px] shrink-0 items-end">
              {tabs.map((item) => (
                <button
                  key={item.name}
                  type="button"
                  role="tab"
                  aria-selected={tab === item.name}
                  onClick={() => setTab(item.name)}
                  className={`${item.width} whitespace-nowrap ${
                    tab === item.name ? "h-[30px] bg-[#ebebeb] pt-1" : "h-7 border-r border-[#d2d1d7] bg-[#dddddd] pt-0.5"
                  }`}
                >
                  {item.name}
                </button>
              ))}
            </div>
            <div className="flex min-h-0 flex-1 gap-4 bg-[#ebebeb] pr-3 pl-[13px]">
              <div className="relative -mt-[5px] flex w-[499px] shrink-0 flex-col pb-3">
                <ComponentTable />
                <ComponentToolbar />
                <h2 className="flex h-[22px] shrink-0 justify-between bg-white px-2 leading-[18px] font-bold text-[#5d6e97]">
                  <span>Komponenteneinstellungen</span>
                  <span>Fin Plate 2</span>
                </h2>
                <div className="flex min-h-0 flex-1">
                  <PropertyTree />
                  <div className="w-[26px] shrink-0 bg-[#f0f0f0] pt-[26px] pl-2">
                    <div className="h-[226px] w-[11px] bg-[#858585]" />
                  </div>
                </div>
              </div>
              <div className="flex min-w-0 flex-1 flex-col pt-2.5 pb-[15px]">
                <Model />
                <ViewToolbar />
              </div>
            </div>
          </div>
        </main>
        <Footer />
      </div>
    </div>
  );
};

export default App;
